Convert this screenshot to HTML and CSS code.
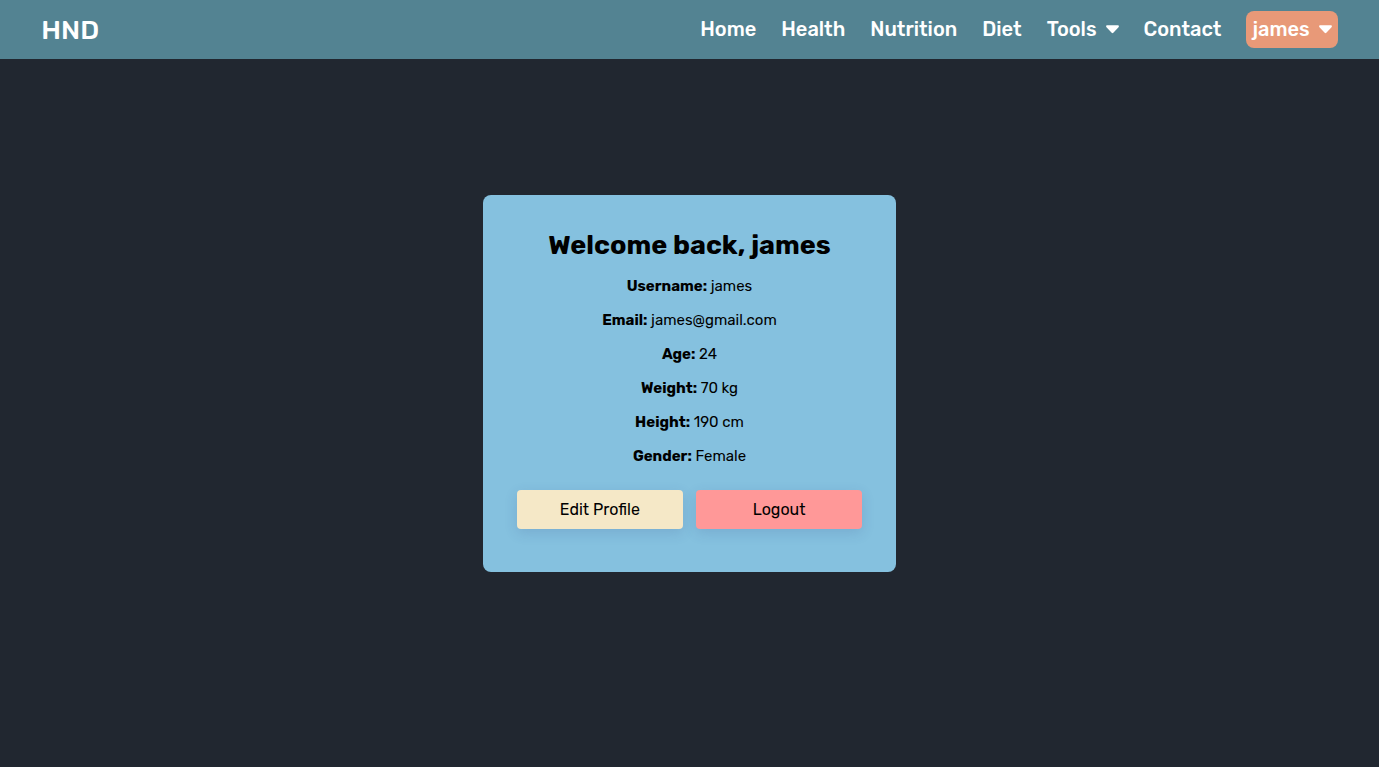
FILE: index.html
```html
<!DOCTYPE html>
<html lang="en">
<head>
<meta charset="utf-8">
<meta name="viewport" content="width=device-width, initial-scale=1">
<title>HND - Profile</title>
<link rel="stylesheet" href="styles.css">
</head>
<body>
<header class="navbar">
  <a class="brand" href="#">HND</a>
  <nav class="nav-links" aria-label="Main">
    <a class="nav-link" href="#">Home</a>
    <a class="nav-link" href="#">Health</a>
    <a class="nav-link" href="#">Nutrition</a>
    <a class="nav-link" href="#">Diet</a>
    <button class="nav-link" type="button" aria-haspopup="true">Tools
      <svg class="caret" viewBox="0 0 14 9" aria-hidden="true"><path d="M1.3 0H12.7C13.8 0 14.3 1.2 13.5 2L7.9 8.1C7.4 8.6 6.6 8.6 6.1 8.1L.5 2C-.3 1.2 .2 0 1.3 0Z"/></svg>
    </button>
    <a class="nav-link" href="#">Contact</a>
    <button class="nav-link nav-user" type="button" aria-haspopup="true">james
      <svg class="caret" viewBox="0 0 14 9" aria-hidden="true"><path d="M1.3 0H12.7C13.8 0 14.3 1.2 13.5 2L7.9 8.1C7.4 8.6 6.6 8.6 6.1 8.1L.5 2C-.3 1.2 .2 0 1.3 0Z"/></svg>
    </button>
  </nav>
</header>
<main class="page">
  <section class="card">
    <h1 class="card-title">Welcome back, james</h1>
    <p class="detail"><strong>Username:</strong> james</p>
    <p class="detail"><strong>Email:</strong> james@gmail.com</p>
    <p class="detail"><strong>Age:</strong> 24</p>
    <p class="detail"><strong>Weight:</strong> 70 kg</p>
    <p class="detail"><strong>Height:</strong> 190 cm</p>
    <p class="detail"><strong>Gender:</strong> Female</p>
    <div class="actions">
      <button class="btn btn-edit" type="button">Edit Profile</button>
      <button class="btn btn-logout" type="button">Logout</button>
    </div>
  </section>
</main>
</body>
</html>
```
FILE: styles.css
```css
* {
  box-sizing: border-box;
  margin: 0;
}

body {
  display: flex;
  flex-direction: column;
  min-height: 100vh;
  background: #212730;
  color: #000;
  font-family: Rubik, Roboto, sans-serif;
}

button {
  border: 0;
  background: none;
  font: inherit;
  cursor: pointer;
}

.navbar {
  display: flex;
  align-items: center;
  justify-content: space-between;
  padding: 11px 3%;
  background: #538392;
}

.brand {
  color: #fff;
  font-size: 27px;
  font-weight: 500;
  line-height: 32px;
  text-decoration: none;
}

.nav-links {
  display: flex;
  align-items: center;
  gap: 25px;
}

.nav-link {
  display: flex;
  align-items: center;
  gap: 9px;
  padding: 0;
  color: #fff;
  font-size: 20px;
  font-weight: 500;
  line-height: 25px;
  text-decoration: none;
}

.nav-user {
  padding: 6px;
  border-radius: 8px;
  background: #e89978;
}

.caret {
  width: 13px;
  height: 9px;
  fill: #fff;
}

.page {
  display: flex;
  flex: 1;
  align-items: center;
  justify-content: center;
  padding-bottom: 59px;
}

.card {
  width: 30%;
  min-width: 320px;
  padding: 34px 34px 43px;
  border-radius: 8px;
  background: #85c1df;
  text-align: center;
}

.card-title {
  margin-bottom: 16px;
  font-size: 27px;
  font-weight: 700;
  line-height: 32px;
}

.detail {
  margin-bottom: 16px;
  font-size: 15px;
  line-height: 18px;
}

.actions {
  display: flex;
  gap: 13px;
  margin-top: 25px;
}

.btn {
  flex: 1;
  padding: 10px;
  border-radius: 4px;
  color: #000;
  font-size: 16px;
  line-height: 19px;
  box-shadow: 0 4px 13px rgba(50, 70, 130, 0.16);
}

.btn-edit {
  background: #f5e8c7;
}

.btn-logout {
  background: #ff9898;
}
```
